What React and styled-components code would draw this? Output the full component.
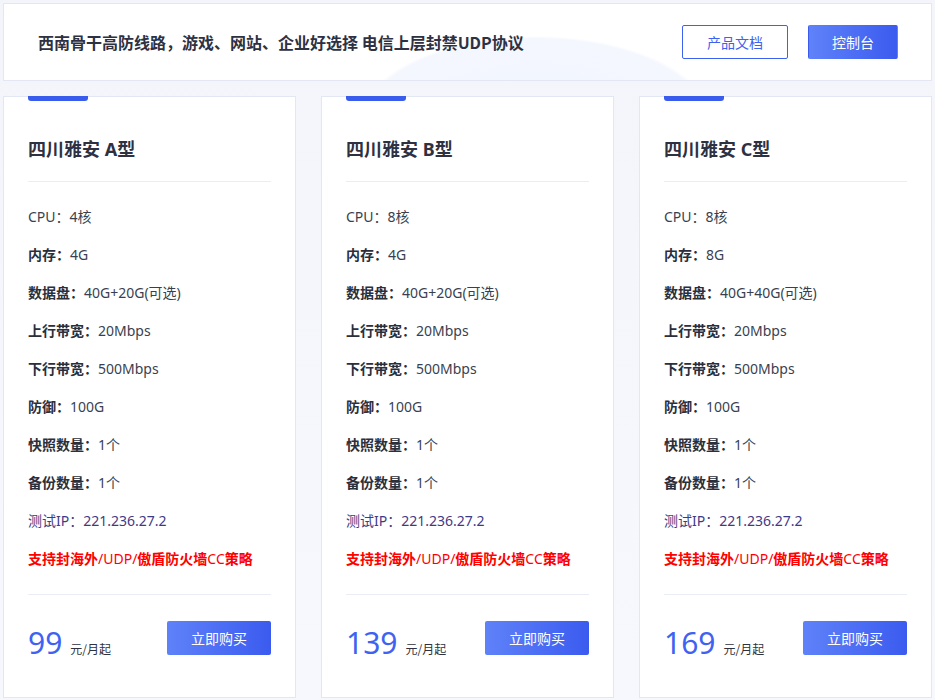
import React from "react";
import styled, { createGlobalStyle } from "styled-components";

const Global = createGlobalStyle`
  html, body { margin: 0; padding: 0; background: #f5f7fc; }
  body { font-family: "Noto Sans", "Noto Sans CJK SC", sans-serif; color: #2e3240; }
  * { box-sizing: border-box; }
`;

const Page = styled.div`
  width: 935px;
  height: 700px;
  padding: 3px 3px 0 3px;
  overflow: hidden;
  background: linear-gradient(180deg, #f3f5fb 0%, #f7f8fd 100%);
`;

const Header = styled.header`
  height: 78px;
  width: 929px;
  border: 1px solid #e2e7f2;
  background:
    radial-gradient(ellipse 176px 86px at 532px 118px, #f1f5fe 0%, #f4f7fe 97%, rgba(255,255,255,0) 100%),
    #ffffff;
  display: flex;
  align-items: center;
  padding: 0 33px 0 34px;
`;

const Slogan = styled.h1`
  margin: 0;
  flex: 1;
  font-family: "Noto Sans CJK SC", sans-serif;
  font-size: 16px;
  font-weight: 700;
  color: #2d3142;
`;

const Actions = styled.div`
  display: flex;
  gap: 20px;
`;

const HeadButton = styled.button`
  height: 34px;
  width: ${(p) => p.$w}px;
  border-radius: 2px;
  font-family: "Noto Sans CJK SC", sans-serif;
  font-size: 14px;
  cursor: pointer;
  border: 1px solid ${(p) => (p.$primary ? "transparent" : "#3d62f0")};
  color: ${(p) => (p.$primary ? "#fff" : "#3d62f0")};
  background: ${(p) =>
    p.$primary ? "linear-gradient(90deg, #5f82f9 0%, #3b5bef 100%)" : "#fff"};
`;

const Grid = styled.div`
  margin-top: 15px;
  display: grid;
  grid-template-columns: repeat(3, 293px);
  gap: 25px;
`;

const Card = styled.div`
  position: relative;
  background: #fff;
  border: 1px solid #e3e7f3;
  height: 602px;
  padding: 0 24px;
`;

const Tab = styled.span`
  position: absolute;
  left: 24px;
  top: -1px;
  width: 60px;
  height: 5px;
  background: #3a5cec;
  border-radius: 0 0 3px 3px;
`;

const Title = styled.h2`
  margin: 0;
  padding: 40px 0 20px;
  font-size: 18px;
  line-height: 24px;
  font-weight: 700;
  color: #2d3142;
  border-bottom: 1px solid #eaedf6;
`;

const Specs = styled.ul`
  list-style: none;
  margin: 0;
  padding: 16px 0 16px;
  border-bottom: 1px solid #eaedf6;
`;

const Row = styled.li`
  font-size: 14px;
  line-height: 38px;
  height: 38px;
  color: ${(p) => p.$color || "#3a3f50"};
  white-space: nowrap;
`;

const Label = styled.span`
  font-weight: ${(p) => (p.$bold ? 700 : 400)};
  color: ${(p) => (p.$bold ? "#2b2f3c" : "inherit")};
`;

const Strong = styled.span`
  font-weight: 700;
`;

const Footer = styled.div`
  display: flex;
  align-items: center;
  justify-content: space-between;
  padding-top: 21px;
`;

const Price = styled.div`
  display: flex;
  align-items: baseline;
  gap: 8px;
  padding-top: 10px;
`;

const Amount = styled.span`
  font-size: 30px;
  line-height: 34px;
  color: #4062f2;
`;

const Unit = styled.span`
  font-family: "Noto Sans CJK SC", sans-serif;
  font-size: 12px;
  color: #2e3240;
`;

const BuyButton = styled.button`
  width: 104px;
  height: 34px;
  border: none;
  border-radius: 2px;
  background: linear-gradient(90deg, #5f82f9 0%, #3b5bef 100%);
  color: #fff;
  font-family: "Noto Sans CJK SC", sans-serif;
  font-size: 14px;
  cursor: pointer;
`;

const plans = [
  { name: "四川雅安 A型", cpu: "4核", mem: "4G", disk: "40G+20G(可选)", price: "99" },
  { name: "四川雅安 B型", cpu: "8核", mem: "4G", disk: "40G+20G(可选)", price: "139" },
  { name: "四川雅安 C型", cpu: "8核", mem: "8G", disk: "40G+40G(可选)", price: "169" },
];

function Plan({ p }) {
  return (
    <Card>
      <Tab />
      <Title>{p.name}</Title>
      <Specs>
        <Row><Label>CPU：</Label>{p.cpu}</Row>
        <Row><Label $bold>内存：</Label>{p.mem}</Row>
        <Row><Label $bold>数据盘：</Label>{p.disk}</Row>
        <Row><Label $bold>上行带宽：</Label>20Mbps</Row>
        <Row><Label $bold>下行带宽：</Label>500Mbps</Row>
        <Row><Label $bold>防御：</Label>100G</Row>
        <Row><Label $bold>快照数量：</Label>1个</Row>
        <Row><Label $bold>备份数量：</Label>1个</Row>
        <Row $color="#3f3a86"><Label>测试IP：</Label>221.236.27.2</Row>
        <Row $color="#ff0000">
          <Strong>支持封海外</Strong>/UDP/<Strong>傲盾防火墙</Strong>CC<Strong>策略</Strong>
        </Row>
      </Specs>
      <Footer>
        <Price>
          <Amount>{p.price}</Amount>
          <Unit>元/月起</Unit>
        </Price>
        <BuyButton>立即购买</BuyButton>
      </Footer>
    </Card>
  );
}

export default function App() {
  return (
    <>
      <Global />
      <Page>
        <Header>
          <Slogan>西南骨干高防线路，游戏、网站、企业好选择 电信上层封禁UDP协议</Slogan>
          <Actions>
            <HeadButton $w={106}>产品文档</HeadButton>
            <HeadButton $w={90} $primary>控制台</HeadButton>
          </Actions>
        </Header>
        <Grid>
          {plans.map((p) => (
            <Plan key={p.name} p={p} />
          ))}
        </Grid>
      </Page>
    </>
  );
}
